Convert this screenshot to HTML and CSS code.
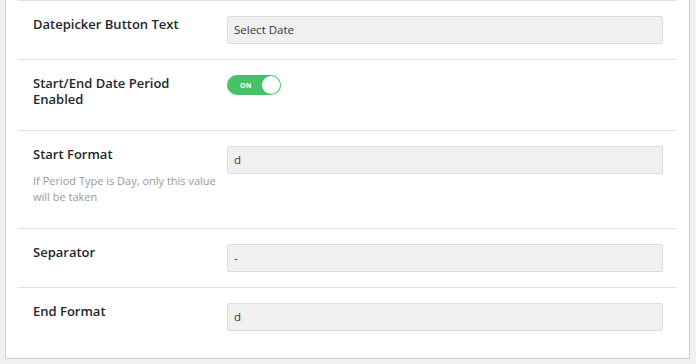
FILE: index.html
```html
<!DOCTYPE html>
<html>
<head>
<meta charset="utf-8">
<link rel="stylesheet" href="styles.css">
</head>
<body>
<div class="panel">
  <div class="row">
    <div class="label">Datepicker Button Text</div>
    <div class="field"><div class="input">Select Date</div></div>
  </div>
  <div class="row">
    <div class="label">Start/End Date Period Enabled</div>
    <div class="field">
      <div class="toggle"><span class="toggle-text">ON</span><span class="knob"></span></div>
    </div>
  </div>
  <div class="row">
    <div class="label">Start Format
      <p class="desc">If Period Type is Day, only this value will be taken</p>
    </div>
    <div class="field"><div class="input">d</div></div>
  </div>
  <div class="row">
    <div class="label">Separator</div>
    <div class="field"><div class="input">-</div></div>
  </div>
  <div class="row">
    <div class="label">End Format</div>
    <div class="field"><div class="input">d</div></div>
  </div>
</div>
</body>
</html>
```
FILE: styles.css
```css
html, body {
  margin: 0;
  padding: 0;
  background: #f1f1f1;
}
body {
  padding: 0 6px 5px 5px;
  font-family: "Open Sans", "Noto Sans", sans-serif;
  color: #23282d;
}
.panel {
  background: #fff;
  border: 1px solid #cccccc;
  border-top: none;
  padding: 0 12px 12px 12px;
}
.row {
  display: grid;
  grid-template-columns: 209px 1fr;
  border-top: 1px solid #e2e2e2;
}
.label {
  padding: 15px 8px 23px 15px;
  font-size: 13px;
  font-weight: 600;
  line-height: 16px;
  color: #23282d;
}
.desc {
  margin: 11px 0 0 0;
  font-size: 11px;
  font-weight: 400;
  line-height: 16px;
  color: #9a9a9a;
}
.field {
  padding: 15px 14px 15px 0;
}
.input {
  box-sizing: border-box;
  height: 28px;
  background: #f0f0f0;
  border: 1px solid #dddddd;
  border-radius: 2px;
  padding: 0 6px;
  font-size: 11.5px;
  line-height: 26px;
  color: #32373c;
}
.toggle {
  position: relative;
  width: 54px;
  height: 20px;
  border-radius: 10px;
  background: #46c266;
  display: flex;
  align-items: center;
}
.toggle-text {
  margin-left: 13px;
  font-size: 7px;
  font-weight: 700;
  color: #ffffff;
  letter-spacing: 0.2px;
}
.knob {
  position: absolute;
  right: 1px;
  top: 1px;
  width: 18px;
  height: 18px;
  border-radius: 50%;
  background: #ffffff;
}
```
